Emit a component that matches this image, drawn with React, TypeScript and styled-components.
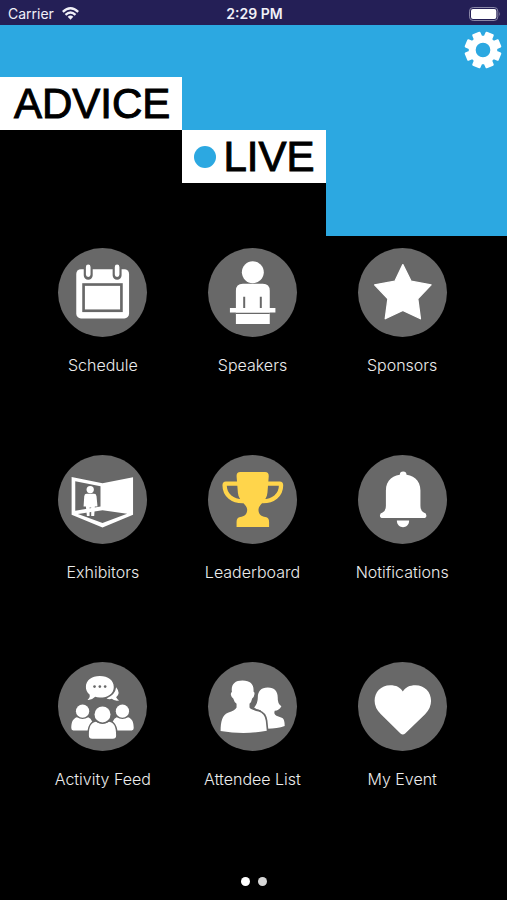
import React from "react";
import styled, { createGlobalStyle } from "styled-components";

const BLUE = "#2ca8e1";
const GREY = "#686868";

const GlobalStyle = createGlobalStyle`
  *, *::before, *::after { box-sizing: border-box; }
  html, body { margin: 0; background: #000; }
  body { font-family: Inter, "Liberation Sans", sans-serif; }
`;

const Screen = styled.div`
  display: flex;
  flex-direction: column;
  min-height: 100vh;
  background: #000;
  color: #fff;
`;

const StatusBar = styled.div`
  display: grid;
  grid-template-columns: 1fr auto 1fr;
  align-items: center;
  height: 25px;
  padding: 2px 6px 0 8px;
  background: #241f56;
  font-size: 14px;
  line-height: 20px;
  color: #f1f0f8;
`;

const StatusLeft = styled.span`
  display: flex;
  align-items: center;
  gap: 8px;
`;

const Time = styled.span`
  font-weight: 600;
`;

const StatusRight = styled.span`
  display: flex;
  justify-content: flex-end;
`;

const Banner = styled.header`
  display: grid;
  grid-template-columns: auto auto 1fr;
  grid-template-rows: 52px 53px 53px 53px;
  background: ${BLUE};
`;

const Actions = styled.div`
  grid-column: 1 / -1;
  display: flex;
  justify-content: flex-end;
  align-items: flex-start;
  padding: 6px 5px;
`;

const IconButton = styled.button`
  display: flex;
  padding: 0;
  border: 0;
  background: none;
  color: #fff;
  cursor: pointer;
`;

const Wordmark = styled.h1`
  display: contents;
  color: #000;
  font-family: "Liberation Sans", Arial, sans-serif;
  font-size: 42px;
  line-height: 53px;
  font-weight: 400;
  -webkit-text-stroke: 1px #000;
`;

const AdvicePlate = styled.span`
  grid-column: 1;
  grid-row: 2;
  padding: 0 12px 0 14px;
  background: #fff;
`;

const LivePlate = styled.span`
  grid-column: 2;
  grid-row: 3;
  display: flex;
  align-items: center;
  gap: 7px;
  padding: 0 12px;
  background: #fff;
`;

const LiveDot = styled.span`
  width: 22px;
  height: 22px;
  border-radius: 50%;
  background: ${BLUE};
`;

const Step = styled.div<{ $row: number; $span: number }>`
  grid-column: 1 / span ${(p) => p.$span};
  grid-row: ${(p) => p.$row};
  background: #000;
`;

const Menu = styled.nav`
  display: grid;
  grid-template-columns: repeat(3, 1fr);
  row-gap: 79px;
  padding: 12px 30px 0 28px;
`;

const Tile = styled.a`
  display: flex;
  flex-direction: column;
  align-items: center;
  gap: 17px;
  color: #ececec;
  text-decoration: none;
  font-size: 16px;
  font-weight: 300;
  line-height: 22px;
  white-space: nowrap;
`;

const Disc = styled.svg`
  width: 89px;
  height: 89px;
  border-radius: 50%;
  background: ${GREY};
`;

const Pager = styled.div`
  display: flex;
  justify-content: center;
  gap: 8px;
  margin-top: auto;
  padding-bottom: 14px;
`;

const PageDot = styled.button<{ $active?: boolean }>`
  width: 9px;
  height: 9px;
  padding: 0;
  border: 0;
  border-radius: 50%;
  background: ${(p) => (p.$active ? "#fff" : "#d6d6d6")};
`;

const gearPoints = Array.from({ length: 8 }, (_, i) => i * 45 + 22.5)
  .flatMap((a) => [
    [a - 15, 40],
    [a - 11, 53],
    [a + 11, 53],
    [a + 15, 40],
  ])
  .map(([a, r]) => {
    const t = (a * Math.PI) / 180;
    return `${(r * Math.sin(t)).toFixed(1)} ${(-r * Math.cos(t)).toFixed(1)}`;
  })
  .join("L");

const GearIcon = () => (
  <svg width="38" height="38" viewBox="-57 -57 114 114" aria-hidden="true">
    <path
      d={`M${gearPoints}ZM22 0A22 22 0 1 0 -22 0A22 22 0 1 0 22 0Z`}
      fill="currentColor"
      fillRule="evenodd"
    />
    <path d={`M${gearPoints}Z`} fill="none" stroke="currentColor" strokeWidth="6" strokeLinejoin="round" />
  </svg>
);

const WifiIcon = () => (
  <svg width="17" height="13" viewBox="0 0 51 38" aria-hidden="true">
    <g fill="none" stroke="currentColor" strokeWidth="7">
      <path d="M2.5 14Q25.5 -7 48.5 14" />
      <path d="M10.5 23Q25.5 9 40.5 23" />
    </g>
    <path d="M17 29Q25.5 21.5 34 29L25.5 37.5Z" fill="currentColor" />
  </svg>
);

const BatteryIcon = () => (
  <svg width="32" height="14" viewBox="0 0 96 42" aria-hidden="true">
    <rect x="1.5" y="1.5" width="85" height="39" rx="11" fill="none" stroke="#8b88a8" strokeWidth="3" />
    <rect x="6" y="6" width="76" height="30" rx="6" fill="#fff" />
    <path d="M91 14Q96 21 91 28Z" fill="#8b88a8" />
  </svg>
);

const tiles: { label: string; viewBox: string; art: React.ReactNode }[] = [
  {
    label: "Schedule",
    viewBox: "26 23 268 268",
    art: (
      <>
        <rect x="81" y="87" width="159" height="148" rx="14" />
        <g strokeLinecap="round" fill="none">
          <path d="M117 78V105M204 78V105" stroke={GREY} strokeWidth="27" />
          <path d="M117 80V103M204 80V103" stroke="#fff" strokeWidth="14" />
        </g>
        <rect x="103" y="133" width="114" height="79" fill="none" stroke={GREY} strokeWidth="8" />
      </>
    ),
  },
  {
    label: "Speakers",
    viewBox: "29 23 268 268",
    art: (
      <>
        <circle cx="164" cy="96" r="33" />
        <path d="M113 204V152Q113 131 134 131H194Q215 131 215 152V204H232V217H215V252H113V217H95V204Z" />
        <path d="M138 170V204M188 170V204" stroke={GREY} strokeWidth="6" />
        <path d="M113 220H215" stroke={GREY} strokeWidth="4" />
      </>
    ),
  },
  {
    label: "Sponsors",
    viewBox: "29 23 268 268",
    art: (
      <path
        d="M164 73L189 123L249 134L209 176L217 236L164 211L111 236L119 176L79 134L140 123Z"
        stroke="#fff"
        strokeWidth="4"
        strokeLinejoin="round"
      />
    ),
  },
  {
    label: "Exhibitors",
    viewBox: "26 25 268 268",
    art: (
      <>
        <path d="M67 91L160 110L252 92V205L160 243L67 205Z" />
        <path d="M78 104L154 119V180L78 193Z" fill={GREY} />
        <path d="M86 203L160 191L234 202L160 230Z" fill={GREY} />
        <circle cx="123" cy="129" r="11" />
        <path d="M112 142H135Q141 142 142 149L145 180H137L135 209H126V183H121V209H113L110 180H103L105 149Q106 142 112 142Z" />
      </>
    ),
  },
  {
    label: "Leaderboard",
    viewBox: "29 25 268 268",
    art: (
      <>
        <path
          d="M126 76H201Q212 76 212 88L208 139C206 164 181 175 181 190C181 204 190 210 202 212Q213 214 213 227V242H115V227Q115 214 126 212C138 210 147 204 147 190C147 175 121 164 119 139L115 88Q115 76 126 76Z"
          fill="#ffd54b"
        />
        <path
          d="M121 111H83Q79 111 79 116C79 146 103 165 136 164M207 111H245Q249 111 249 116C249 146 225 165 192 164"
          fill="none"
          stroke="#ffd54b"
          strokeWidth="13"
        />
      </>
    ),
  },
  {
    label: "Notifications",
    viewBox: "29 25 268 268",
    art: (
      <>
        <circle cx="165" cy="85" r="10" />
        <path d="M113 132C113 101 136 84 165 84S217 101 217 132V178Q217 193 227 198Q235 200 235 207Q235 215 226 215H104Q95 215 95 207Q95 200 103 198Q113 193 113 178Z" />
        <path d="M146 222H183C183 249 146 249 146 222Z" />
      </>
    ),
  },
  {
    label: "Activity Feed",
    viewBox: "26 25 268 268",
    art: (
      <>
        <path d="M201 101Q216 119 201 131Q205 138 210 141Q194 143 188 136Q180 138 172 135Q199 123 201 101Z" />
        <path d="M152 67C177 67 194 80 194 100C194 120 177 132 152 132Q143 132 138 130Q129 140 115 139Q124 132 121 123Q110 114 110 100C110 80 127 67 152 67Z" />
        <g fill={GREY}>
          <circle cx="136" cy="99" r="4" />
          <circle cx="152" cy="99" r="4" />
          <circle cx="168" cy="99" r="4" />
        </g>
        <circle cx="100" cy="173" r="20" />
        <circle cx="220" cy="173" r="20" />
        <path d="M83 191Q100 202 117 191Q133 197 133 231H72Q66 231 66 224C66 205 71 195 83 191Z" />
        <path d="M203 191Q220 202 237 191C249 195 254 205 254 224Q254 231 248 231H187Q187 197 203 191Z" />
        <g stroke={GREY} strokeWidth="10" paintOrder="stroke">
          <path d="M140 205Q160 217 180 205C195 208 201 219 201 246Q201 256 191 256H129Q119 256 119 246C119 219 125 208 140 205Z" />
          <circle cx="160" cy="183" r="24" />
        </g>
      </>
    ),
  },
  {
    label: "Attendee List",
    viewBox: "29 25 268 268",
    art: (
      <>
        <path d="M209 102C230 102 239 114 239 132Q238 151 250 158Q243 171 230 172Q226 182 235 187L253 194Q260 199 260 218Q235 227 200 226L184 180Q190 176 188 170Q174 169 168 162Q179 150 179 132C179 114 188 102 209 102Z" />
        <path
          d="M133 81C158 81 168 94 166 114Q171 117 168 125Q167 133 162 135Q160 146 154 151V162Q158 169 181 174Q200 179 203 202L206 232Q140 245 67 233C67 205 72 184 89 178Q112 170 115 162V151Q108 146 105 135Q100 132 98 124Q97 117 101 115C98 94 108 81 133 81Z"
          stroke={GREY}
          strokeWidth="10"
          paintOrder="stroke"
        />
      </>
    ),
  },
  {
    label: "My Event",
    viewBox: "29 25 268 268",
    art: (
      <path d="M164 114C172 101 184 95 202 95C230 95 249 116 249 142Q249 165 231 182L171 240Q164 246 157 240L98 182Q79 165 79 142C79 116 98 95 126 95C144 95 156 101 164 114Z" />
    ),
  },
];

export default function App() {
  return (
    <Screen>
      <GlobalStyle />
      <StatusBar>
        <StatusLeft>
          Carrier
          <WifiIcon />
        </StatusLeft>
        <Time>2:29 PM</Time>
        <StatusRight>
          <BatteryIcon />
        </StatusRight>
      </StatusBar>
      <Banner>
        <Actions>
          <IconButton type="button" aria-label="Settings">
            <GearIcon />
          </IconButton>
        </Actions>
        <Wordmark>
          <AdvicePlate>ADVICE</AdvicePlate>
          <LivePlate>
            <LiveDot />
            LIVE
          </LivePlate>
        </Wordmark>
        <Step $row={3} $span={1} />
        <Step $row={4} $span={2} />
      </Banner>
      <Menu aria-label="Event menu">
        {tiles.map((t) => (
          <Tile href="#" key={t.label}>
            <Disc viewBox={t.viewBox} fill="#fff" aria-hidden="true">
              {t.art}
            </Disc>
            {t.label}
          </Tile>
        ))}
      </Menu>
      <Pager>
        <PageDot type="button" aria-label="Page 1" $active />
        <PageDot type="button" aria-label="Page 2" />
      </Pager>
    </Screen>
  );
}
